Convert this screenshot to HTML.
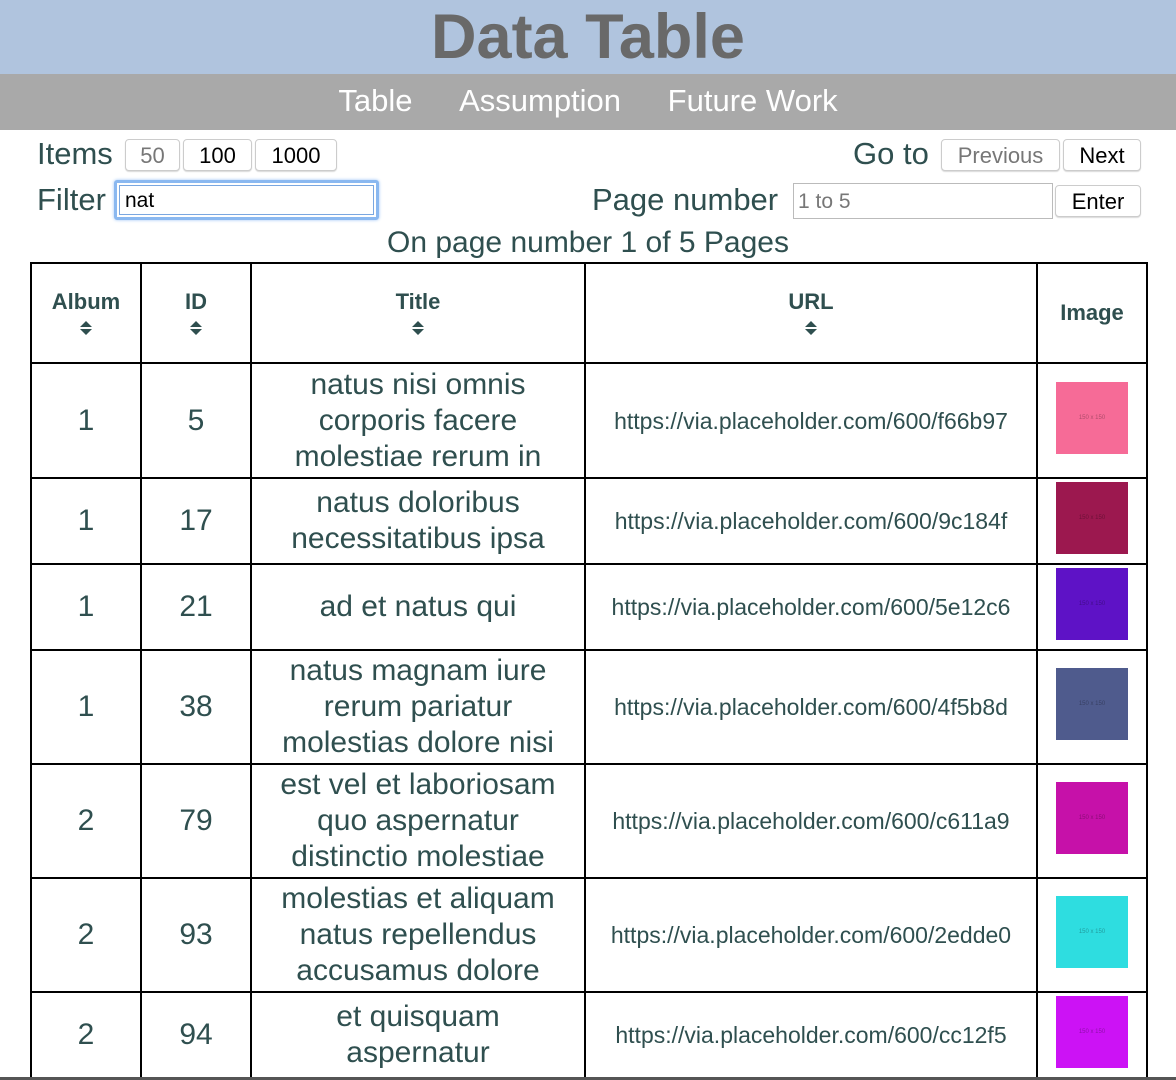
<!DOCTYPE html>
<html><head><meta charset="utf-8"><style>
*{box-sizing:border-box;margin:0;padding:0}
body{width:1176px;height:1080px;overflow:hidden;background:#fff;font-family:"Liberation Sans",Arial,sans-serif;color:#2f4f4f;position:relative}
.hdr{position:absolute;left:0;top:0;width:1176px;height:74px;background:#b0c4de;text-align:center;font-weight:bold;font-size:63px;color:#696969;line-height:74px}
.nav{position:absolute;left:0;top:74px;width:1176px;height:56px;background:#a9a9a9;color:#fff;font-size:31px;line-height:54px;text-align:center}
.nav span{margin:0 19px}
.a{position:absolute;white-space:nowrap}
.lbl{font-size:31px}
.btn{position:absolute;border:1px solid #ccc;border-radius:4px;background:#fff;font-size:22px;text-align:center;color:#000;box-shadow:0 1px 1px rgba(0,0,0,.15)}
table{position:absolute;left:30px;top:262px;border-collapse:collapse;table-layout:fixed}
td,th{border:2px solid #000;text-align:center;vertical-align:middle;padding:0}
th{font-size:22px;font-weight:bold;height:100px}
td{font-size:30px;line-height:36px}
td.t{padding:0 22px}
td.u{font-size:23px}
.s{display:block;margin:4px auto 0;width:14px;height:18px}
.img{width:72px;height:72px;margin:-6px auto 0;font-size:6px;color:rgba(0,0,0,.3);line-height:72px}
</style></head><body>
<div class="hdr">Data Table</div>
<div class="nav"><span>Table</span> <span>Assumption</span> <span>Future Work</span></div>
<div class="a lbl" style="left:37px;top:136px">Items</div>
<div class="btn" style="left:125px;top:139px;width:55px;height:32px;line-height:32px;color:#777">50</div>
<div class="btn" style="left:183px;top:139px;width:69px;height:32px;line-height:32px">100</div>
<div class="btn" style="left:255px;top:139px;width:82px;height:32px;line-height:32px">1000</div>
<div class="a lbl" style="left:37px;top:182px">Filter</div>
<div class="a" style="left:114px;top:180px;width:265px;height:40px;border:3px solid #8ab8f0;border-radius:3px;box-shadow:0 0 3px #9cc4f5"><div style="position:absolute;left:2px;top:2px;right:2px;bottom:2px;border:1px solid #7aa7e0;font-size:21px;line-height:30px;padding-left:5px;color:#000">nat</div></div>
<div class="a lbl" style="left:853px;top:136px">Go to</div>
<div class="btn" style="left:941px;top:139px;width:119px;height:32px;line-height:32px;color:#777">Previous</div>
<div class="btn" style="left:1063px;top:139px;width:78px;height:32px;line-height:32px">Next</div>
<div class="a lbl" style="left:592px;top:182px">Page number</div>
<div class="a" style="left:793px;top:183px;width:260px;height:36px;border:1px solid #bbb;font-size:21px;line-height:36px;padding-left:4px;color:#777">1 to 5</div>
<div class="btn" style="left:1055px;top:185px;width:86px;height:32px;line-height:32px">Enter</div>
<div class="a" style="left:0;width:1176px;text-align:center;top:226px;font-size:30px">On page number 1 of 5 Pages</div>
<table>
<colgroup><col style="width:110px"><col style="width:110px"><col style="width:334px"><col style="width:452px"><col style="width:110px"></colgroup>
<tr><th>Album<svg class="s" viewBox="0 0 14 18"><path d="M1 8L7 2L13 8Z M1 10L7 16L13 10Z" fill="#2f4f4f"/></svg></th><th>ID<svg class="s" viewBox="0 0 14 18"><path d="M1 8L7 2L13 8Z M1 10L7 16L13 10Z" fill="#2f4f4f"/></svg></th><th>Title<svg class="s" viewBox="0 0 14 18"><path d="M1 8L7 2L13 8Z M1 10L7 16L13 10Z" fill="#2f4f4f"/></svg></th><th>URL<svg class="s" viewBox="0 0 14 18"><path d="M1 8L7 2L13 8Z M1 10L7 16L13 10Z" fill="#2f4f4f"/></svg></th><th>Image</th></tr>
<tr style="height:115px"><td>1</td><td>5</td><td class="t">natus nisi omnis corporis facere molestiae rerum in</td><td class="u">https://via.placeholder.com/600/f66b97</td><td><div class="img" style="background:#f66b97">150 x 150</div></td></tr>
<tr style="height:86px"><td>1</td><td>17</td><td class="t">natus doloribus necessitatibus ipsa</td><td class="u">https://via.placeholder.com/600/9c184f</td><td><div class="img" style="background:#9c184f">150 x 150</div></td></tr>
<tr style="height:86px"><td>1</td><td>21</td><td class="t">ad et natus qui</td><td class="u">https://via.placeholder.com/600/5e12c6</td><td><div class="img" style="background:#5e12c6">150 x 150</div></td></tr>
<tr style="height:114px"><td>1</td><td>38</td><td class="t">natus magnam iure rerum pariatur molestias dolore nisi</td><td class="u">https://via.placeholder.com/600/4f5b8d</td><td><div class="img" style="background:#4f5b8d">150 x 150</div></td></tr>
<tr style="height:114px"><td>2</td><td>79</td><td class="t">est vel et laboriosam quo aspernatur distinctio molestiae</td><td class="u">https://via.placeholder.com/600/c611a9</td><td><div class="img" style="background:#c611a9">150 x 150</div></td></tr>
<tr style="height:114px"><td>2</td><td>93</td><td class="t">molestias et aliquam natus repellendus accusamus dolore</td><td class="u">https://via.placeholder.com/600/2edde0</td><td><div class="img" style="background:#2edde0">150 x 150</div></td></tr>
<tr style="height:86px"><td>2</td><td>94</td><td class="t">et quisquam aspernatur</td><td class="u">https://via.placeholder.com/600/cc12f5</td><td><div class="img" style="background:#cc12f5">150 x 150</div></td></tr>
</table>
<div class="a" style="left:0;top:1077px;width:1176px;height:3px;background:#555"></div>
</body></html>
